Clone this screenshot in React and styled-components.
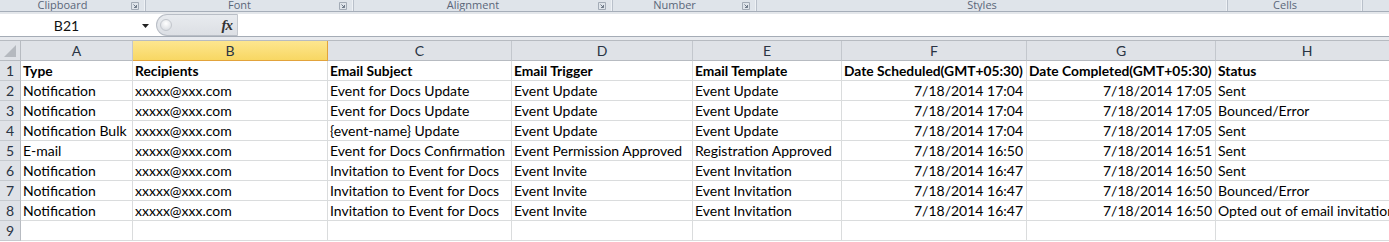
import React from "react";
import styled, { createGlobalStyle } from "styled-components";

const GlobalStyle = createGlobalStyle`
  html, body {
    margin: 0;
    padding: 0;
    background: #ffffff;
    overflow: hidden;
  }
  body {
    font-family: Lato, "Liberation Sans", sans-serif;
  }
`;

const groups = [
  { label: "Clipboard", width: 146, launcher: true },
  { label: "Font", width: 208, launcher: true },
  { label: "Alignment", width: 259, launcher: true },
  { label: "Number", width: 144, launcher: true },
  { label: "Styles", width: 471, launcher: false },
  { label: "Cells", width: 135, launcher: false },
];

const columns = [
  { name: "A", width: 112 },
  { name: "B", width: 195, selected: true },
  { name: "C", width: 184 },
  { name: "D", width: 181 },
  { name: "E", width: 149 },
  { name: "F", width: 185, align: "right" },
  { name: "G", width: 189, align: "right" },
  { name: "H", width: null },
];

const rows = [
  ["Type", "Recipients", "Email Subject", "Email Trigger", "Email Template", "Date Scheduled(GMT+05:30)", "Date Completed(GMT+05:30)", "Status"],
  ["Notification", "xxxxx@xxx.com", "Event for Docs Update", "Event Update", "Event Update", "7/18/2014 17:04", "7/18/2014 17:05", "Sent"],
  ["Notification", "xxxxx@xxx.com", "Event for Docs Update", "Event Update", "Event Update", "7/18/2014 17:04", "7/18/2014 17:05", "Bounced/Error"],
  ["Notification Bulk", "xxxxx@xxx.com", "{event-name} Update", "Event Update", "Event Update", "7/18/2014 17:04", "7/18/2014 17:05", "Sent"],
  ["E-mail", "xxxxx@xxx.com", "Event for Docs Confirmation", "Event Permission Approved", "Registration Approved", "7/18/2014 16:50", "7/18/2014 16:51", "Sent"],
  ["Notification", "xxxxx@xxx.com", "Invitation to Event for Docs", "Event Invite", "Event Invitation", "7/18/2014 16:47", "7/18/2014 16:50", "Sent"],
  ["Notification", "xxxxx@xxx.com", "Invitation to Event for Docs", "Event Invite", "Event Invitation", "7/18/2014 16:47", "7/18/2014 16:50", "Bounced/Error"],
  ["Notification", "xxxxx@xxx.com", "Invitation to Event for Docs", "Event Invite", "Event Invitation", "7/18/2014 16:47", "7/18/2014 16:50", "Opted out of email invitation"],
  ["", "", "", "", "", "", "", ""],
];

function Launcher() {
  return (
    <LauncherIcon width="8" height="8" viewBox="0 0 8 8">
      <path d="M0.5 0.5 H7.5 V7.5 H0.5 Z" fill="none" stroke="#a3abb6" />
      <path d="M2.5 2.5 L5.5 5.5 M3 5.5 H5.5 V3" fill="none" stroke="#6f7a89" />
    </LauncherIcon>
  );
}

function Ribbon() {
  return (
    <RibbonBar>
      {groups.map((g) => (
        <Group key={g.label} $width={g.width}>
          <GroupLabel>{g.label}</GroupLabel>
          {g.launcher && <Launcher />}
        </Group>
      ))}
      <Group $width={null} />
    </RibbonBar>
  );
}

function FormulaBar() {
  return (
    <FormulaRow>
      <NameBox>
        <NameText>B21</NameText>
        <DropArrow width="8" height="4" viewBox="0 0 8 4">
          <path d="M0 0 H7 L3.5 4 Z" fill="#222" />
        </DropArrow>
      </NameBox>
      <Pill>
        <Knob />
        <Fx>fx</Fx>
      </Pill>
      <FormulaInput />
    </FormulaRow>
  );
}

function Grid() {
  return (
    <Sheet>
      <Corner>
        <svg width="12" height="12" viewBox="0 0 12 12">
          <path d="M12 0 V12 H0 Z" fill="#b5b9bf" />
        </svg>
      </Corner>
      {columns.map((c) => (
        <ColHeader key={c.name} $selected={c.selected}>
          {c.name}
        </ColHeader>
      ))}
      {rows.map((r, i) => (
        <React.Fragment key={i}>
          <RowHeader>{i + 1}</RowHeader>
          {r.map((v, j) => (
            <Cell key={j} $bold={i === 0} $align={i === 0 ? "left" : columns[j].align}>
              {v}
            </Cell>
          ))}
        </React.Fragment>
      ))}
    </Sheet>
  );
}

export default function App() {
  return (
    <>
      <GlobalStyle />
      <Window>
        <Ribbon />
        <FormulaBar />
        <Band />
        <Grid />
      </Window>
    </>
  );
}

const Window = styled.div`
  width: 1389px;
  height: 242px;
  overflow: hidden;
  background: #fff;
`;

const RibbonBar = styled.div`
  display: flex;
  height: 11px;
  background: #dfe4ea;
  border-bottom: 1px solid #a6aeb9;
  overflow: hidden;
`;

const Group = styled.div`
  position: relative;
  display: flex;
  align-items: flex-start;
  box-sizing: border-box;
  width: ${(p) => (p.$width ? `${p.$width}px` : "auto")};
  flex: ${(p) => (p.$width ? "none" : "1")};
  border-right: ${(p) => (p.$width ? "1px solid #b9c0ca" : "none")};
  box-shadow: ${(p) => (p.$width ? "inset -1px 0 0 #eef1f5" : "none")};
  padding-right: 20px;
`;

const GroupLabel = styled.span`
  flex: 1;
  text-align: center;
  font-family: "Open Sans", "Liberation Sans", sans-serif;
  font-size: 11px;
  line-height: 10px;
  color: #5a6679;
  white-space: nowrap;
`;

const LauncherIcon = styled.svg`
  position: absolute;
  right: 6px;
  top: 2px;
`;

const FormulaRow = styled.div`
  display: flex;
  height: 22px;
  margin-top: 2px;
  background: #fff;
  box-shadow: 0 -2px 0 #e4e7eb;
`;

const NameBox = styled.div`
  display: flex;
  align-items: center;
  width: 156px;
  flex: none;
`;

const NameText = styled.span`
  width: 133px;
  text-align: center;
  font-family: Lato, "Liberation Sans", sans-serif;
  font-size: 14px;
  color: #111;
`;

const DropArrow = styled.svg`
  margin-left: 9px;
  margin-top: 1px;
`;

const Pill = styled.div`
  display: flex;
  align-items: center;
  justify-content: space-between;
  box-sizing: border-box;
  width: 82px;
  height: 22px;
  padding: 0 5px 0 3px;
  background: linear-gradient(#e8ebef, #dcdfe4);
  border: 1px solid #b9bec6;
  border-right: 1px solid #c4c8ce;
  border-radius: 11px 0 0 11px;
`;

const Knob = styled.div`
  width: 10px;
  height: 10px;
  border-radius: 50%;
  background: radial-gradient(circle at 50% 35%, #ffffff, #d2d6dc);
  border: 1px solid #c3c7cd;
`;

const Fx = styled.span`
  font-family: "Liberation Serif", serif;
  font-style: italic;
  font-weight: bold;
  font-size: 15px;
  color: #333;
  letter-spacing: -1px;
`;

const FormulaInput = styled.div`
  flex: 1;
  background: #fff;
`;

const Band = styled.div`
  height: 3px;
  background: #e8eaee;
  border-top: 1px solid #a5acb6;
  border-bottom: 1px solid #b7bbc1;
`;

const Sheet = styled.div`
  display: grid;
  grid-template-columns: 21px ${columns
      .filter((c) => c.width)
      .map((c) => `${c.width}px`)
      .join(" ")} 1fr;
  grid-auto-rows: 20px;
  overflow: hidden;
`;

const headerBase = `
  box-sizing: border-box;
  display: flex;
  align-items: center;
  justify-content: center;
  font-family: Lato, "Liberation Sans", sans-serif;
  font-size: 14px;
  color: #2a3444;
  background: #dfe2e7;
`;

const Corner = styled.div`
  ${headerBase}
  justify-content: flex-end;
  align-items: flex-end;
  padding: 0 4px 3px 0;
  border-right: 1px solid #b7bbc1;
  border-bottom: 1px solid #b7bbc1;
`;

const ColHeader = styled.div`
  ${headerBase}
  border-right: 1px solid ${(p) => (p.$selected ? "#e2a33b" : "#c3c7cd")};
  border-bottom: 1px solid ${(p) => (p.$selected ? "#e2a33b" : "#b7bbc1")};
  background: ${(p) =>
    p.$selected ? "linear-gradient(#fde68f, #f8d763)" : "#dfe2e7"};
`;

const RowHeader = styled.div`
  ${headerBase}
  border-right: 1px solid #b7bbc1;
  border-bottom: 1px solid #c6cacf;
`;

const Cell = styled.div`
  box-sizing: border-box;
  display: flex;
  align-items: center;
  justify-content: ${(p) => (p.$align === "right" ? "flex-end" : "flex-start")};
  padding: 0 3px 0 2px;
  border-right: 1px solid #dadcdd;
  border-bottom: 1px solid #dadcdd;
  font-family: Lato, "Liberation Sans", sans-serif;
  font-size: ${(p) => (p.$bold ? "13.8px" : "14px")};
  font-weight: ${(p) => (p.$bold ? 700 : 400)};
  color: #000;
  white-space: nowrap;
  overflow: visible;
`;
